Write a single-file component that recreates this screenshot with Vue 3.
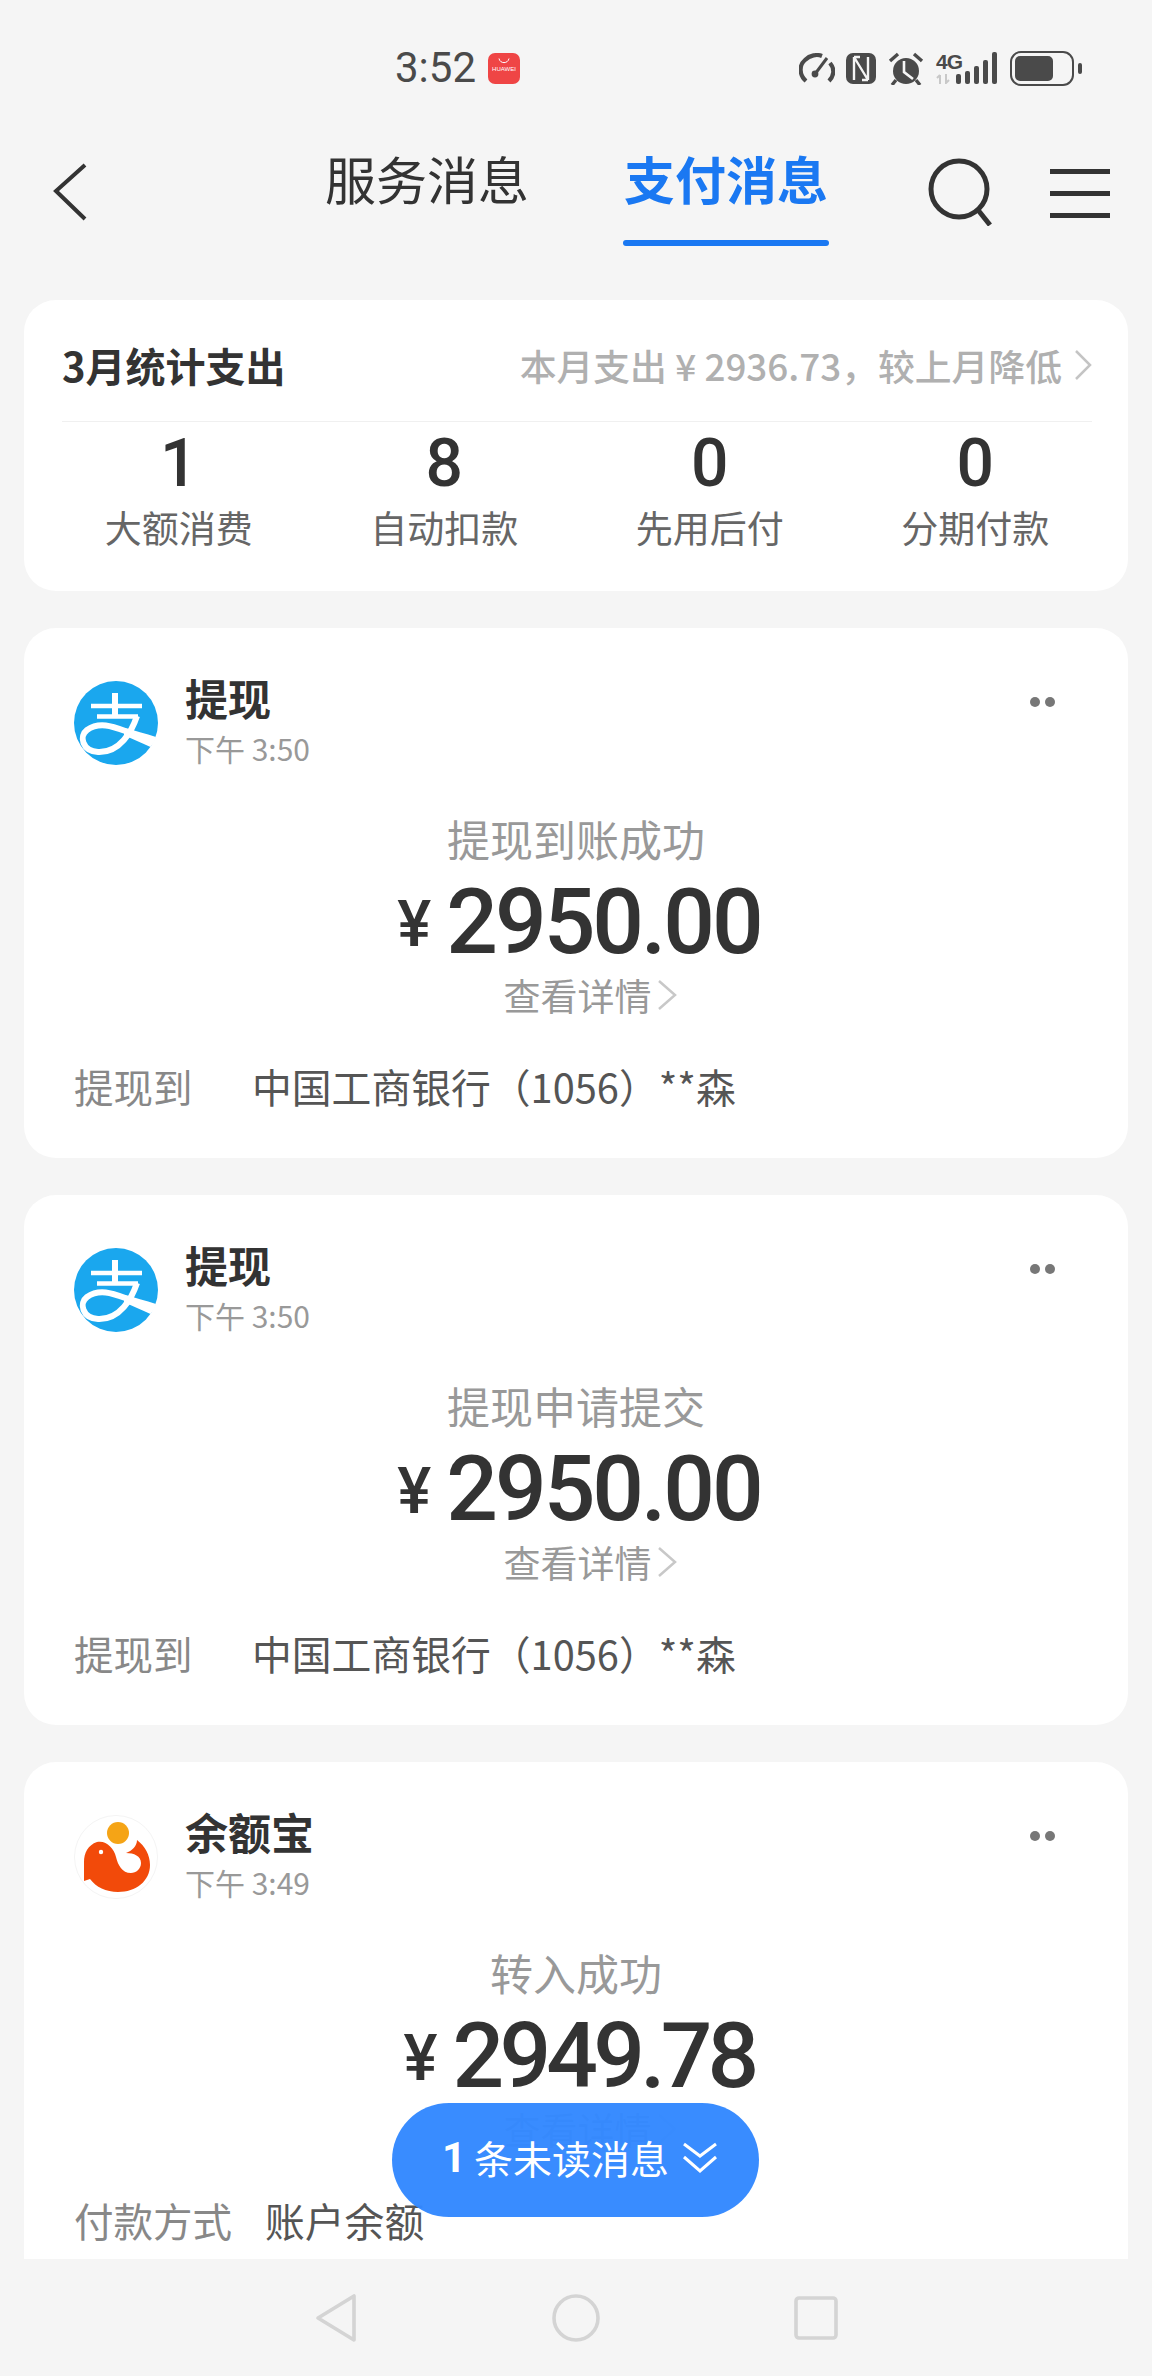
<template>
  <div class="page">
    <div class="status">
      <span class="clock">3:52</span>
      <div class="hw">
        <svg width="14" height="7" viewBox="0 0 14 7"><path d="M2 0.5C3 6 11 6 12 0.5" fill="none" stroke="#fff" stroke-width="1" /></svg>
        <span class="hw-text">HUAWEI</span>
      </div>
      <div class="status-icons">
        <svg class="ic-gauge" width="36" height="30" viewBox="0 0 36 30" fill="none" stroke="#4a4a4a" stroke-width="4.2">
          <path d="M7 28C0 22 0 12 6 7C11 2 18 1 23 3" />
          <path d="M31 10C36 16 35 23 30 28" />
          <path d="M16 21L28 5" stroke-width="3" />
          <circle cx="16" cy="21" r="3.4" fill="#4a4a4a" stroke="none" />
        </svg>
        <svg class="ic-nfc" width="30" height="31" viewBox="0 0 30 31">
          <rect width="30" height="31" rx="7" fill="#4a4a4a" />
          <path d="M8 4V27M22 4V27M8 4L22 27M14 4H8M16 27H22" fill="none" stroke="#f5f5f5" stroke-width="2.4" />
        </svg>
        <svg class="ic-alarm" width="36" height="33" viewBox="0 0 36 33">
          <circle cx="18" cy="19" r="13" fill="#4a4a4a" />
          <path d="M2 9L10 2M34 9L26 2M8 28L4 33M28 28L32 33" stroke="#4a4a4a" stroke-width="3.4" fill="none" />
          <path d="M16 9V20L25 27" stroke="#f5f5f5" stroke-width="2.6" fill="none" />
        </svg>
        <div class="net">
          <span class="net-g">4G</span>
          <svg width="15" height="10" viewBox="0 0 15 10"><path d="M4 1V10M1 4L4 1M10 0V9L13 6" stroke="#c8c8c8" stroke-width="2" fill="none" /></svg>
        </div>
        <div class="bars">
          <i v-for="h in [10, 13, 18, 24, 32]" :key="h" :style="{ height: h + 'px' }"></i>
        </div>
        <div class="battery"><div class="battery-in"></div></div>
        <div class="nub"></div>
      </div>
    </div>

    <div class="head">
      <svg class="back" width="38" height="58" viewBox="0 0 38 58" fill="none" stroke="#333" stroke-width="4">
        <path d="M33 2L4 28L33 56" />
      </svg>
      <div class="tab">服务消息</div>
      <div class="tab active">支付消息</div>
      <svg class="search" width="66" height="68" viewBox="0 0 66 68" fill="none" stroke="#333" stroke-width="5">
        <circle cx="31" cy="31" r="28" />
        <path d="M50 52L62 67" />
      </svg>
      <div class="menu"><i></i><i></i><i></i></div>
    </div>

    <div class="list">
      <section class="card summary">
        <div class="sum-top">
          <span class="sum-title">3月统计支出</span>
          <span class="sum-desc">本月支出 ¥ 2936.73，较上月降低</span>
          <svg width="18" height="32" viewBox="0 0 18 32" fill="none" stroke="#c4c4c4" stroke-width="2.5"><path d="M2 2L16 16L2 30" /></svg>
        </div>
        <div class="sum-stats">
          <div v-for="s in stats" :key="s.label" class="stat">
            <div class="stat-num">{{ s.num }}</div>
            <div class="stat-label">{{ s.label }}</div>
          </div>
        </div>
      </section>

      <section v-for="m in messages" :key="m.status + m.time" class="card msg">
        <div class="msg-head">
          <svg v-if="m.logo === 'alipay'" class="logo" width="84" height="84" viewBox="0 0 84 84">
            <circle cx="42" cy="42" r="42" fill="#1aa7ee" />
            <g fill="none" stroke="#fff">
              <path d="M17 25H68M23 35.5H64" stroke-width="4.6" />
              <path d="M41 12V36" stroke-width="6" />
              <path d="M63 35C58 50 46 72 24 71C8 70 5 55 13 49C26 40 40 46 54 51" stroke-width="6" />
            </g>
            <path d="M50 47C60 49 72 53 82 56C81 60 79 63 76.5 66C68 62 58 58 50 54Z" fill="#fff" />
          </svg>
          <svg v-else class="logo" width="84" height="84" viewBox="0 0 84 84">
            <circle cx="42" cy="42" r="41.5" fill="#fff" stroke="#f4f4f4" />
            <circle cx="44" cy="18" r="11" fill="#f5a416" />
            <path d="M23 27C14 30 10 38 10 47L10 66L16 64C22 72 32 77 44 77C62 77 76 66 76 50C76 40 71 31 63 25C63 31 58 36 52 38C60 38 67 41 67 48C67 54 62 58 57 58C48 58 44 50 42 42C40 33 32 25 23 27Z" fill="#f24a0a" />
            <circle cx="27" cy="37" r="2.2" fill="#fff" />
          </svg>
          <div class="msg-who">
            <div class="msg-name">{{ m.name }}</div>
            <div class="msg-time">{{ m.time }}</div>
          </div>
          <div class="dots"><i></i><i></i></div>
        </div>
        <div class="msg-status">{{ m.status }}</div>
        <div class="msg-amount" :class="{ tight: m.logo === 'yeb' }"><span class="yen">¥</span><span>{{ m.amount }}</span></div>
        <div class="msg-link">
          查看详情
          <svg width="20" height="32" viewBox="0 0 20 32" fill="none" stroke="#c8c8c8" stroke-width="2.5"><path d="M2 2L18 16L2 30" /></svg>
        </div>
        <div class="msg-row">
          <span class="row-label" :class="{ wide: m.label.length > 3 }">{{ m.label }}</span>
          <span class="row-value">{{ m.value }}</span>
        </div>
      </section>
    </div>

    <div class="unread">
      <b>1</b>
      <span>条未读消息</span>
      <svg width="34" height="32" viewBox="0 0 34 32" fill="none" stroke="#fff" stroke-width="3">
        <path d="M1 3L17 15L33 3M1 16L17 30L33 16" />
      </svg>
    </div>

    <div class="nav">
      <svg width="42" height="50" viewBox="0 0 42 50" fill="none" stroke="#d4d4d4" stroke-width="3.6" stroke-linejoin="round">
        <path d="M39 3V47L3 25Z" />
      </svg>
      <svg width="48" height="48" viewBox="0 0 48 48" fill="none" stroke="#d4d4d4" stroke-width="3.6">
        <circle cx="24" cy="24" r="22" />
      </svg>
      <svg width="44" height="44" viewBox="0 0 44 44" fill="none" stroke="#d4d4d4" stroke-width="3.6">
        <rect x="2" y="2" width="40" height="40" rx="3" />
      </svg>
    </div>
  </div>
</template>

<script setup>
const stats = [
  { num: 1, label: '大额消费' },
  { num: 8, label: '自动扣款' },
  { num: 0, label: '先用后付' },
  { num: 0, label: '分期付款' }
];

const messages = [
  { logo: 'alipay', name: '提现', time: '下午 3:50', status: '提现到账成功', amount: '2950.00', label: '提现到', value: '中国工商银行（1056）**森' },
  { logo: 'alipay', name: '提现', time: '下午 3:50', status: '提现申请提交', amount: '2950.00', label: '提现到', value: '中国工商银行（1056）**森' },
  { logo: 'yeb', name: '余额宝', time: '下午 3:49', status: '转入成功', amount: '2949.78', label: '付款方式', value: '账户余额' }
];
</script>

<style scoped>
.page {
  position: relative;
  width: 1152px;
  height: 2376px;
  overflow: hidden;
  display: flex;
  flex-direction: column;
  background: #f5f5f5;
  color: #333;
  font-family: "Noto Sans CJK SC", "Noto Sans", sans-serif;
}

.status {
  height: 130px;
  flex: none;
  box-sizing: border-box;
  padding: 46px 0 0 395px;
  display: flex;
  align-items: flex-start;
}
.clock {
  font-family: Roboto, sans-serif;
  font-size: 42px;
  line-height: 44px;
  color: #4a4a4a;
}
.hw {
  width: 32px;
  height: 31px;
  margin: 7px 0 0 12px;
  border-radius: 7px;
  background: #ef4545;
  display: flex;
  flex-direction: column;
  align-items: center;
  padding-top: 5px;
  box-sizing: border-box;
}
.hw svg {
  display: block;
}
.hw-text {
  font-family: "Liberation Sans", sans-serif;
  font-size: 6px;
  line-height: 9px;
  color: #fff;
  white-space: nowrap;
}
.status-icons {
  display: flex;
  align-items: center;
  height: 36px;
  margin: 4px 0 0 279px;
}
.status-icons svg {
  flex: none;
}
.ic-nfc {
  margin-left: 11px;
}
.ic-alarm {
  margin-left: 12px;
}
.net {
  width: 20px;
  margin-left: 12px;
}
.net svg {
  display: block;
  margin-top: 2px;
}
.net-g {
  display: block;
  font-family: "Liberation Sans", sans-serif;
  font-size: 21px;
  line-height: 20px;
  letter-spacing: -1px;
  font-weight: 700;
  color: #4a4a4a;
  white-space: nowrap;
}
.bars {
  display: flex;
  align-items: flex-end;
  gap: 4px;
}
.bars i {
  width: 5px;
  border-radius: 2px;
  background: #4a4a4a;
}
.battery {
  width: 64px;
  height: 35px;
  margin-left: 13px;
  box-sizing: border-box;
  border: 2.5px solid #4a4a4a;
  border-radius: 11px;
  padding: 3px;
}
.battery-in {
  width: 38px;
  height: 100%;
  border-radius: 5px;
  background: #4a4a4a;
}
.nub {
  width: 4px;
  height: 11px;
  margin-left: 4px;
  border-radius: 2px;
  background: #4a4a4a;
}

.head {
  height: 170px;
  flex: none;
  box-sizing: border-box;
  display: flex;
  align-items: flex-start;
}
.back {
  margin: 33px 0 0 52px;
  flex: none;
}
.tab {
  margin: 18px 0 0 235px;
  height: 92px;
  font-size: 51px;
  line-height: 60px;
  color: #333;
  white-space: nowrap;
}
.tab.active {
  margin-left: 94px;
  padding: 0 1px;
  height: 98px;
  box-sizing: border-box;
  font-weight: 700;
  color: #1a78f2;
  position: relative;
}
.tab.active::after {
  content: "";
  position: absolute;
  left: 0;
  right: 0;
  bottom: 0;
  height: 6px;
  border-radius: 3px;
  background: #1a78f2;
}
.search {
  margin: 28px 0 0 99px;
  flex: none;
}
.menu {
  width: 60px;
  margin: 39px 0 0 56px;
  display: flex;
  flex-direction: column;
  gap: 17px;
  flex: none;
}
.menu i {
  height: 5px;
  background: #333;
}

.list {
  flex: 1;
  min-height: 0;
  overflow: hidden;
  padding: 0 24px;
  display: flex;
  flex-direction: column;
  gap: 37px;
}
.card {
  flex: none;
  background: #fff;
  border-radius: 32px;
}

.summary {
  height: 291px;
  box-sizing: border-box;
  padding: 35px 36px 0 38px;
}
.sum-top {
  display: flex;
  align-items: center;
  height: 60px;
  padding-bottom: 26px;
  box-sizing: content-box;
  border-bottom: 1px solid #f0f0f0;
}
.sum-title {
  font-size: 40px;
  font-weight: 700;
  line-height: 60px;
  color: #333;
}
.sum-desc {
  margin-left: auto;
  margin-right: 12px;
  font-size: 36.8px;
  font-weight: 500;
  line-height: 60px;
  color: #b0b0b0;
}
.sum-stats {
  display: grid;
  grid-template-columns: repeat(4, 1fr);
  margin: 12px -16px 0 -16px;
}
.stat {
  text-align: center;
}
.stat-num {
  font-family: Roboto, sans-serif;
  font-weight: 500;
  font-size: 66px;
  line-height: 60px;
  color: #333;
}
.stat-label {
  margin-top: 11px;
  font-size: 37px;
  line-height: 44px;
  color: #666;
}

.msg {
  position: relative;
  box-sizing: border-box;
  height: 530px;
  padding: 43px 50px 0;
}
.msg-head {
  display: flex;
  align-items: flex-start;
}
.logo {
  flex: none;
  margin-top: 10px;
}
.msg-who {
  margin-left: 27px;
}
.msg-name {
  font-size: 43px;
  font-weight: 700;
  line-height: 52px;
  color: #333;
}
.msg-time {
  margin-top: 7px;
  font-size: 30px;
  line-height: 36px;
  color: #999;
}
.dots {
  margin: 26px 23px 0 auto;
  display: flex;
  gap: 5px;
}
.dots i {
  width: 10px;
  height: 10px;
  border-radius: 50%;
  background: #777;
}
.msg-status {
  margin-top: 44px;
  text-align: center;
  font-size: 43px;
  line-height: 56px;
  color: #999;
}
.msg-amount {
  margin-top: 8px;
  height: 96px;
  padding-left: 6px;
  display: flex;
  justify-content: center;
  align-items: center;
  gap: 15px;
  font-family: Roboto, sans-serif;
  font-weight: 500;
  font-size: 91px;
  line-height: 96px;
  letter-spacing: -3px;
  color: #333;
}
.msg-amount.tight {
  letter-spacing: -4.8px;
}
.yen {
  font-size: 64px;
  letter-spacing: 0;
  margin-top: 6px;
}
.msg-link {
  margin-top: 1px;
  padding-left: 28px;
  display: flex;
  justify-content: center;
  align-items: center;
  gap: 5px;
  font-size: 37px;
  line-height: 48px;
  color: #999;
}
.msg-row {
  margin-top: 42px;
  display: flex;
  font-size: 39.8px;
  line-height: 50px;
}
.row-label {
  width: 178px;
  flex: none;
  font-size: 39.5px;
  color: #888;
}
.row-label.wide {
  width: 191px;
}
.row-value {
  color: #555;
}

.unread {
  position: absolute;
  left: 392px;
  top: 2103px;
  width: 367px;
  height: 114px;
  box-sizing: border-box;
  padding: 0 0 6px 8px;
  border-radius: 57px;
  background: rgba(51, 136, 255, 0.97);
  color: #fff;
  display: flex;
  align-items: center;
  justify-content: center;
  font-size: 39px;
}
.unread b {
  font-family: Roboto, sans-serif;
  font-size: 42px;
  font-weight: 700;
  margin-right: 8px;
}
.unread svg {
  margin-left: 14px;
  flex: none;
}

.nav {
  height: 117px;
  flex: none;
  background: #f5f5f5;
  display: grid;
  grid-template-columns: repeat(3, 48px);
  justify-content: center;
  justify-items: center;
  align-items: center;
  column-gap: 192px;
}
</style>
